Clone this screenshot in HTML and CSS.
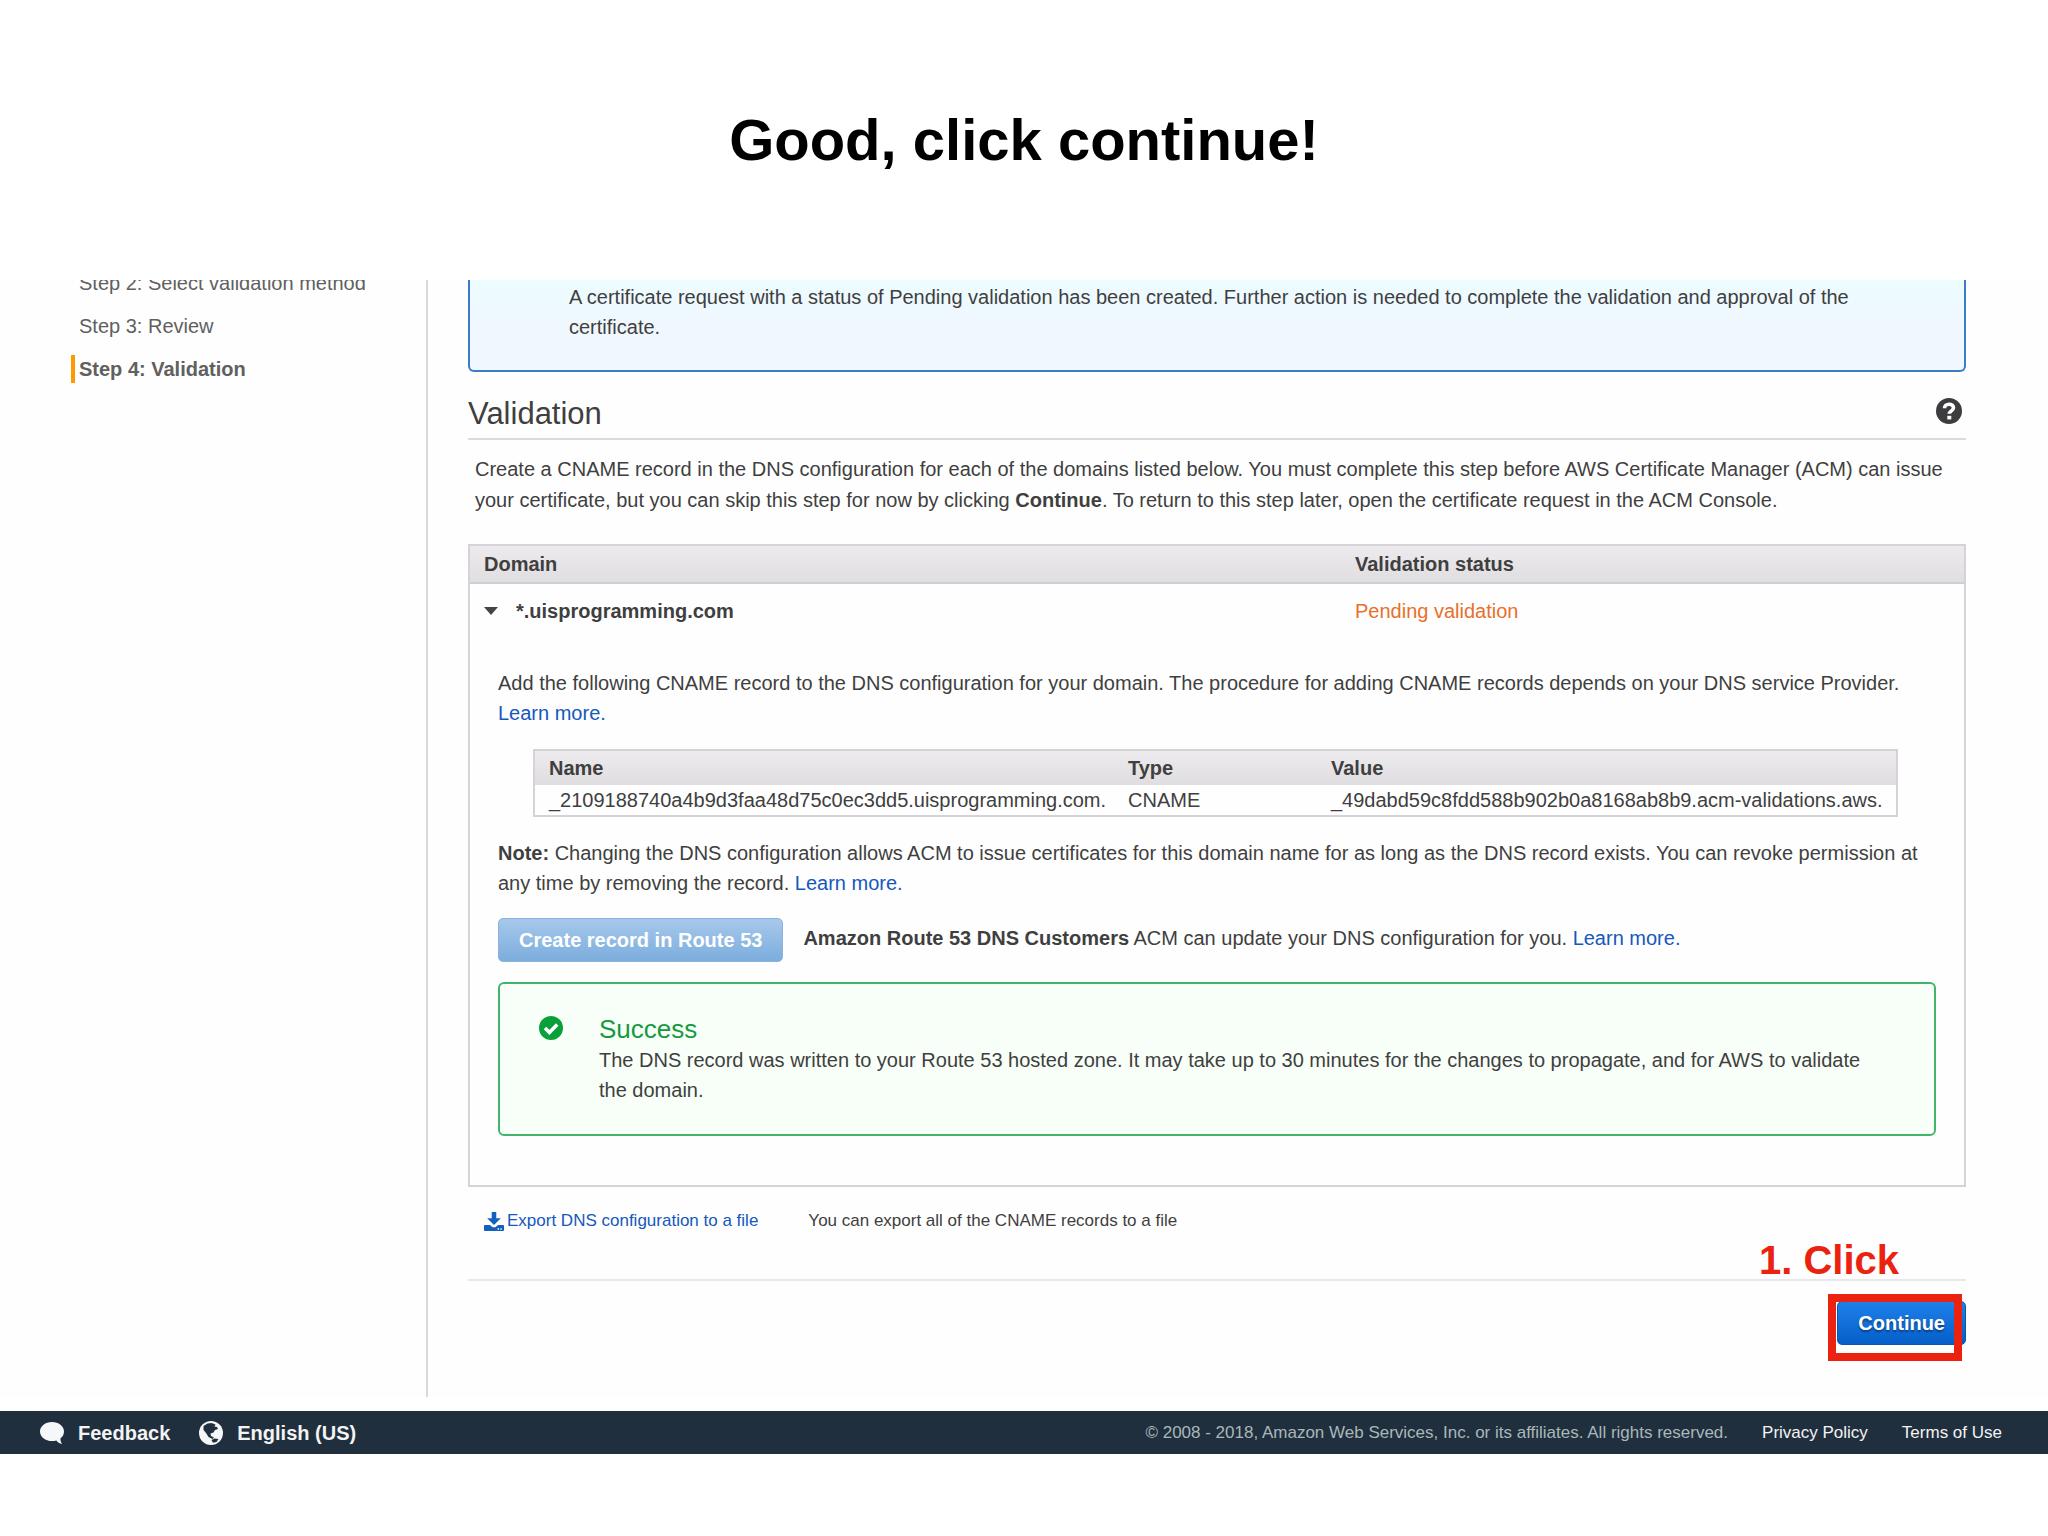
FILE: index.html
```html
<!DOCTYPE html>
<html lang="en">
  <head>
    <meta charset="UTF-8" />
    <meta name="viewport" content="width=device-width, initial-scale=1.0" />
    <title>Good, click continue!</title>
    <link rel="stylesheet" href="styles.css">
  </head>
  <body>
    <h1 class="slide-title">Good, click continue!</h1>

    <div class="console">
      <nav class="sidebar">
        <ul class="steps">
          <li>Step 2: Select validation method</li>
          <li>Step 3: Review</li>
          <li class="active">Step 4: Validation</li>
        </ul>
      </nav>

      <main class="content">
        <div class="alert-info">
          A certificate request with a status of Pending validation has been created. Further action is needed to complete the validation and approval of the<br>certificate.
        </div>

        <div class="section-header">
          <h2>Validation</h2>
          <button class="help" aria-label="Help">
            <svg viewBox="0 0 26 26">
              <circle cx="13" cy="13" r="13" fill="#3d3d3f" />
              <path d="M8.5 10.300C8.500 7.700 10.300 6.200 13 6.200s4.500 1.500 4.500 3.600c0 2.900-4.200 3.200-4.200 6" fill="none" stroke="#fff" stroke-width="3.600" />
              <rect x="11.300" y="17.800" width="4" height="3.600" fill="#fff" />
            </svg>
          </button>
        </div>

        <p class="intro">
          Create a CNAME record in the DNS configuration for each of the domains listed below. You must complete this step before AWS Certificate Manager (ACM) can issue<br>your certificate, but you can skip this step for now by clicking <b>Continue</b>. To return to this step later, open the certificate request in the ACM Console.
        </p>

        <table class="domains">
          <thead>
            <tr>
              <th class="col-domain">Domain</th>
              <th>Validation status</th>
            </tr>
          </thead>
          <tbody>
            <tr class="domain-row">
              <td>
                <button class="toggle" aria-expanded="true"><span class="caret"></span>*.uisprogramming.com</button>
              </td>
              <td class="pending">Pending validation</td>
            </tr>
            <tr>
              <td class="details" colspan="2">
                <p>
                  Add the following CNAME record to the DNS configuration for your domain. The procedure for adding CNAME records depends on your DNS service Provider.<br><a href="#">Learn more.</a>
                </p>

                <table class="records">
                  <thead>
                    <tr>
                      <th class="col-name">Name</th>
                      <th class="col-type">Type</th>
                      <th>Value</th>
                    </tr>
                  </thead>
                  <tbody>
                    <tr>
                      <td>_2109188740a4b9d3faa48d75c0ec3dd5.uisprogramming.com.</td>
                      <td>CNAME</td>
                      <td>_49dabd59c8fdd588b902b0a8168ab8b9.acm-validations.aws.</td>
                    </tr>
                  </tbody>
                </table>

                <p>
                  <b>Note:</b> Changing the DNS configuration allows ACM to issue certificates for this domain name for as long as the DNS record exists. You can revoke permission at<br>any time by removing the record. <a href="#">Learn more.</a>
                </p>

                <div class="route53">
                  <button class="btn btn-disabled" disabled>Create record in Route 53</button>
                  <span><b>Amazon Route 53 DNS Customers</b> ACM can update your DNS configuration for you. <a href="#">Learn more.</a></span>
                </div>

                <div class="alert-success">
                  <svg class="check" viewBox="0 0 24 24">
                    <circle cx="12" cy="12" r="12" fill="#09a03a" />
                    <path d="M6 12l4.400 4.400L18.200 8.600" fill="none" stroke="#fff" stroke-width="3.600" />
                  </svg>
                  <div>
                    <h3>Success</h3>
                    <p>
                      The DNS record was written to your Route 53 hosted zone. It may take up to 30 minutes for the changes to propagate, and for AWS to validate<br>the domain.
                    </p>
                  </div>
                </div>
              </td>
            </tr>
          </tbody>
        </table>

        <div class="export">
          <a href="#">
            <svg viewBox="0 0 22 22">
              <path d="M8.500 1h5v7h5L11 15.500 3.500 8h5z" />
              <path d="M1 15.500h5.500l3 2.500h3l3-2.500H21q1 0 1 1V21q0 1-1 1H1q-1 0-1-1v-4.500q0-1 1-1z" />
              <path d="M15 19h1.500v1.500H15zM18 19h1.500v1.500H18z" fill="#fff" />
            </svg>Export DNS configuration to a file</a>
          <span>You can export all of the CNAME records to a file</span>
        </div>

        <div class="actions">
          <button class="btn btn-primary">Continue</button>
          <div class="callout-box"></div>
          <div class="callout-text">1. Click</div>
        </div>
      </main>
    </div>

    <footer class="footer">
      <a class="tool" href="#">
        <svg viewBox="0 0 26 24">
          <path d="M13 0C5.800 0 0 4.500 0 10.400s5.800 10.400 13 10.400c1.700 0 3.300-.2 4.700-.7 1.400 1.900 3.400 3.200 6.300 3.700-1.400-1.600-2-3.700-1.900-5.800C24.600 16 26 13.600 26 10.400 26 4.500 20.200 0 13 0z" fill="#f5f7f8" />
        </svg>
        Feedback
      </a>
      <a class="tool" href="#">
        <svg viewBox="0 0 24 24">
          <circle cx="12" cy="12" r="12" fill="#f5f7f8" />
          <path d="M4.500 5l4-2.500 4-.5 4 1.500-1 2 2.500.5 1 2-3 1-1.500 2.500-3 1 .5 2.500 3 1.500-1.500 1.500-4-2L7 12 4.500 9z" fill="#202f3e" />
          <path d="M12.500 19l3-1.500 4 .5-2 3-3.500.800z" fill="#202f3e" />
        </svg>
        English (US)
      </a>
      <span class="copyright">© 2008 - 2018, Amazon Web Services, Inc. or its affiliates. All rights reserved.</span>
      <a class="legal" href="#">Privacy Policy</a>
      <a class="legal" href="#">Terms of Use</a>
    </footer>
  </body>
</html>
```
FILE: styles.css
```css
* {
  box-sizing: border-box;
}
body {
  margin: 0;
  background-color: #fff;
  color: #3f3f3f;
  font-family: "Liberation Sans", Arial, sans-serif;
  font-size: 20px;
  line-height: 30px;
}
h1,
h2,
h3,
p,
ul {
  margin: 0;
  padding: 0;
}
a {
  color: #1558bd;
  text-decoration: none;
}
button {
  font: inherit;
  color: inherit;
  border: none;
  background: none;
  padding: 0;
  cursor: pointer;
}
svg {
  display: block;
  flex: none;
}
.slide-title {
  padding: 104px 0;
  color: #000;
  font-size: 58px;
  line-height: 72px;
  text-align: center;
}

/* console */
.console {
  display: flex;
  overflow: hidden;
  background-color: #fefefe;
}
.sidebar {
  flex: 0 0 428px;
  border-right: 2px solid #d9d7db;
}
/* scrolled so the first step is partly out of view */
.steps {
  margin-top: -11px;
  padding-left: 71px;
  list-style: none;
  color: #606060;
}
.steps li {
  margin-bottom: 15px;
  padding-left: 4px;
  border-left: 4px solid transparent;
  line-height: 28px;
}
.steps .active {
  border-color: #ff9900;
  font-weight: bold;
}
.content {
  flex: 1;
  min-width: 0;
  padding: 0 82px 52px 40px;
}
.alert-info {
  padding: 2px 20px 28px 99px;
  border: 2px solid #3b7cc9;
  border-top: none;
  border-radius: 0 0 6px 6px;
  background: linear-gradient(#ecfcff, #f0f7ff 50%);
}
.section-header {
  display: flex;
  align-items: flex-start;
  justify-content: space-between;
  margin-top: 24px;
  padding-bottom: 6px;
  border-bottom: 2px solid #dcdadf;
}
.section-header h2 {
  font-size: 31px;
  line-height: 36px;
  font-weight: normal;
}
.help {
  margin-right: 4px;
  padding-top: 2px;
}
.help svg {
  width: 26px;
  height: 26px;
}
.intro {
  margin: 14px 0 28px;
  padding-left: 7px;
  line-height: 31px;
}

/* tables */
table {
  width: 100%;
  border: 2px solid #d5d3d8;
  border-spacing: 0;
}
th,
td {
  padding: 0 0 0 14px;
  text-align: left;
}
th {
  height: 34px;
}
thead {
  background: linear-gradient(#edebee, #dfdde0);
}
.domains {
  table-layout: fixed;
}
.domains > thead th {
  height: 38px;
  border-bottom: 2px solid #d0ced3;
}
.col-domain {
  width: 58.3%;
}
.domain-row td {
  padding-top: 12px;
  padding-bottom: 14px;
}
.toggle {
  display: flex;
  align-items: center;
  gap: 18px;
  font-weight: bold;
}
.caret {
  border: 7px solid transparent;
  border-top: 8px solid #444;
  border-bottom: none;
}
.domain-row .pending {
  color: #e8702a;
}
.domains .details {
  padding: 28px 28px 49px;
}
.records {
  width: auto;
  margin: 21px 38px 21px 35px;
}
.records td {
  white-space: nowrap;
}
.col-name {
  width: 579px;
}
.col-type {
  width: 203px;
}
.records th:last-child {
  width: 579px;
}

.route53 {
  display: flex;
  gap: 20px;
  margin: 20px 0;
  line-height: 40px;
}
.btn {
  height: 44px;
  padding: 0 20px;
  border-radius: 5px;
  color: #fff;
  font-weight: bold;
  line-height: 42px;
}
.btn-disabled {
  border: 1px solid #8db2dc;
  background: linear-gradient(#a7c8eb, #7caddd);
  cursor: default;
}
.btn-primary {
  border: 1px solid #0b57ae;
  background: linear-gradient(#1f80ea, #055fc8);
  text-shadow: 0 2px 2px rgba(0, 0, 0, 0.4);
}
.alert-success {
  display: flex;
  gap: 36px;
  padding: 29px 20px 29px 39px;
  border: 2px solid #43b56b;
  border-radius: 6px;
  background-color: #f7fff8;
}
.alert-success h3 {
  color: #159a3c;
  font-size: 26px;
  line-height: 32px;
  font-weight: normal;
}
.check {
  width: 24px;
  height: 24px;
  margin-top: 3px;
}

.export {
  display: flex;
  gap: 50px;
  margin-top: 22px;
  padding: 0 16px 46px;
  border-bottom: 2px solid #e9e7ec;
  font-size: 17px;
  line-height: 24px;
}
.export a {
  display: flex;
  align-items: center;
  gap: 3px;
}
.export svg {
  width: 20px;
  height: 20px;
  fill: #1262bd;
}
.actions {
  position: relative;
  display: flex;
  justify-content: flex-end;
  padding-top: 20px;
}

/* red annotation over the Continue button */
.callout-box {
  position: absolute;
  top: 13px;
  right: 4px;
  width: 134px;
  height: 67px;
  border: 8px solid #eb220f;
  pointer-events: none;
}
.callout-text {
  position: absolute;
  top: -44px;
  right: 67px;
  color: #eb220f;
  font-size: 40px;
  line-height: 46px;
  font-weight: bold;
}

.footer {
  display: flex;
  align-items: center;
  margin-top: 14px;
  padding: 0 46px 0 40px;
  height: 43px;
  background-color: #202f3e;
  color: #fff;
  font-size: 17px;
}
.tool {
  display: flex;
  align-items: center;
  gap: 14px;
  margin-right: 29px;
  color: #f2f3f3;
  font-size: 20px;
  font-weight: bold;
}
.tool svg {
  width: 24px;
  height: 24px;
}
.copyright {
  margin-left: auto;
  color: #a9b7b9;
}
.legal {
  margin-left: 34px;
  color: #f2f3f3;
}
```
